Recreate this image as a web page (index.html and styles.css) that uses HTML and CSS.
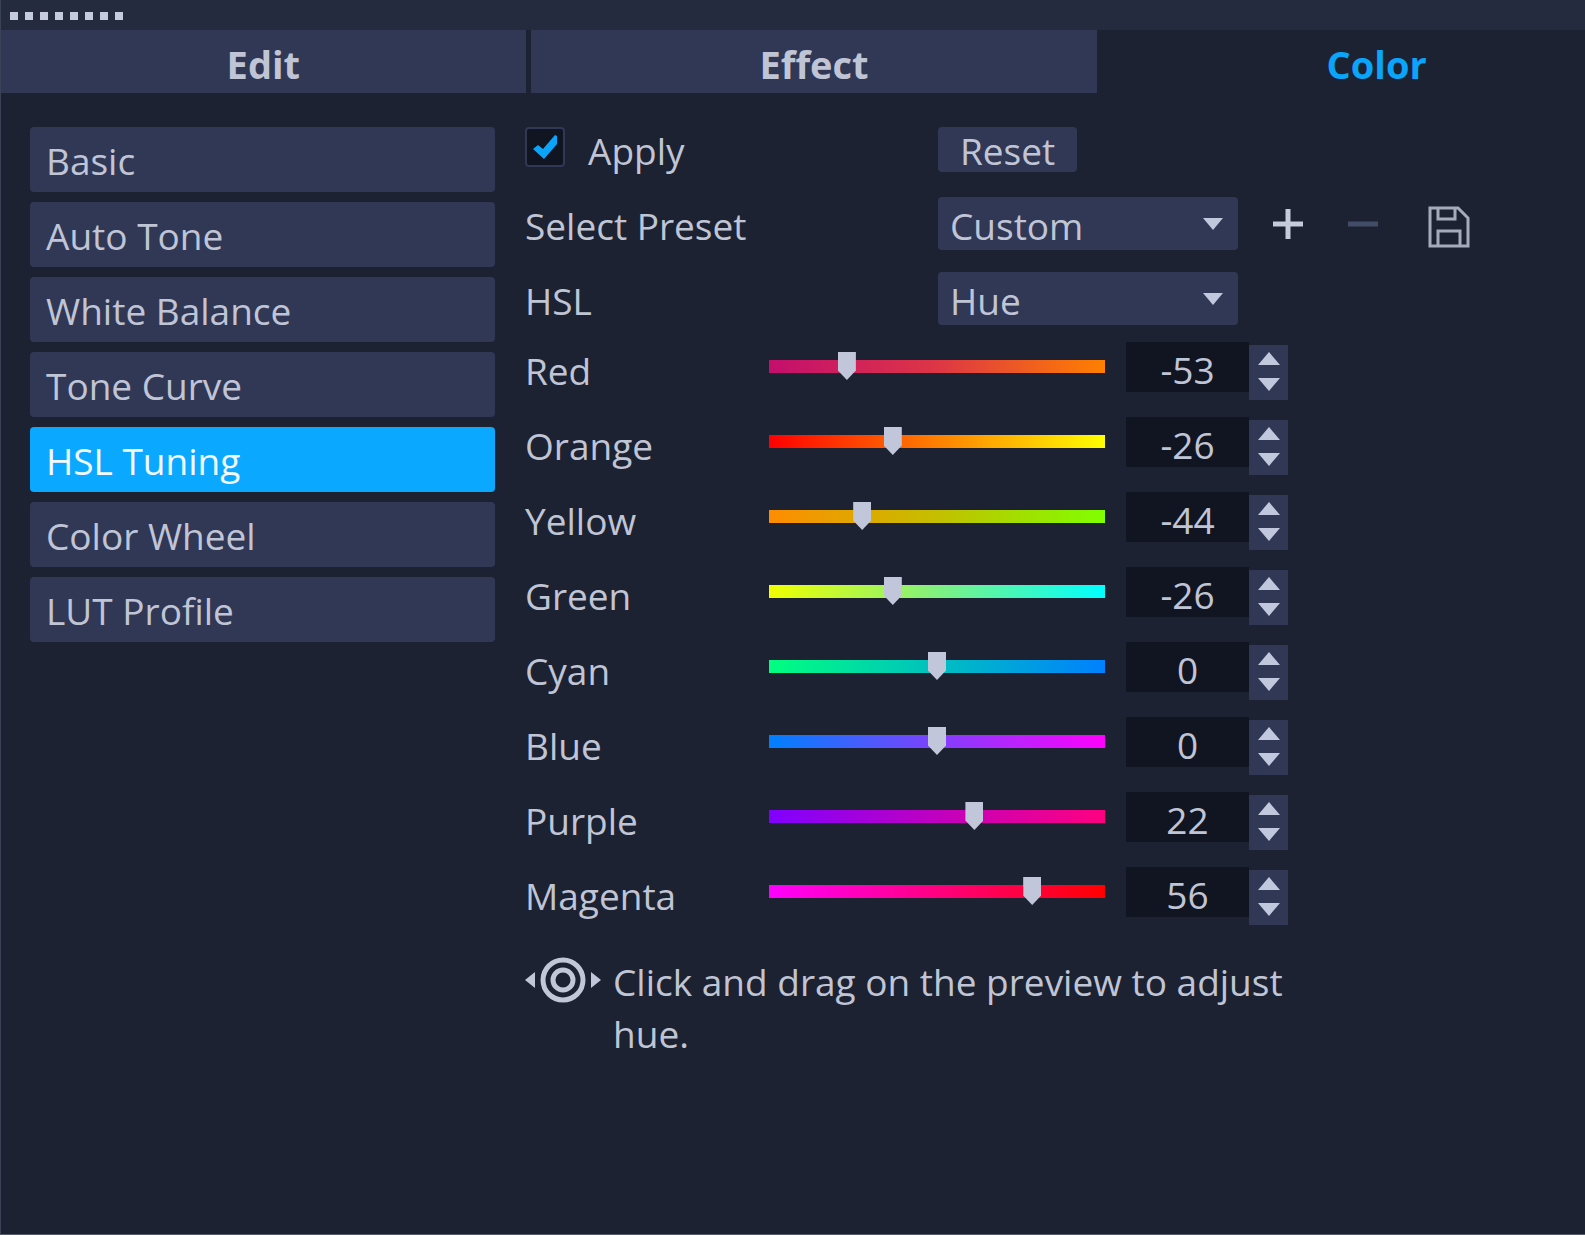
FILE: index.html
```html
<!DOCTYPE html>
<html lang="en">
    <head>
        <meta charset="UTF-8">
        <meta name="viewport" content="width=device-width, initial-scale=1">
        <title>Color - HSL Tuning</title>
        <link rel="stylesheet" href="styles.css">
    </head>
    <body>
        <!-- Drag handle of the docked panel -->
        <div class="grip">
            <span></span><span></span><span></span><span></span><span></span><span></span><span></span><span></span>
        </div>

        <nav class="tabs">
            <button type="button" class="tab tab-edit">Edit</button>
            <button type="button" class="tab tab-effect">Effect</button>
            <button type="button" class="tab tab-color active">Color</button>
        </nav>

        <main class="panel">
            <nav class="sections">
                <button type="button" class="section">Basic</button>
                <button type="button" class="section">Auto Tone</button>
                <button type="button" class="section">White Balance</button>
                <button type="button" class="section">Tone Curve</button>
                <button type="button" class="section active">HSL Tuning</button>
                <button type="button" class="section">Color Wheel</button>
                <button type="button" class="section">LUT Profile</button>
            </nav>

            <form class="controls">
                <div class="row row-short">
                    <div class="row-label check">
                        <input type="checkbox" id="apply" checked>
                        <label for="apply">Apply</label>
                    </div>
                    <button type="button" class="reset">Reset</button>
                </div>

                <div class="row">
                    <label class="row-label" for="preset">Select Preset</label>
                    <select id="preset">
                        <option>Custom</option>
                    </select>
                    <div class="preset-actions">
                        <button type="button" class="icon-button" aria-label="Add preset">
                            <svg width="32" height="32" viewBox="0 0 32 32"><path d="M16 1v30M1 16h30" stroke="#c5cadc" stroke-width="5"/></svg>
                        </button>
                        <button type="button" class="icon-button" aria-label="Remove preset" disabled>
                            <svg width="32" height="32" viewBox="0 0 32 32"><path d="M1 16h30" stroke="#414c68" stroke-width="5"/></svg>
                        </button>
                        <button type="button" class="icon-button save" aria-label="Save preset">
                            <svg width="42" height="42" viewBox="0 0 42 42" fill="none" stroke="#a5abbc" stroke-width="3">
                                <path d="M2 2h28l10 10v28H2z"/>
                                <path d="M10 2v11h17V2M10 40V25h22v15"/>
                            </svg>
                        </button>
                    </div>
                </div>

                <div class="row row-short">
                    <label class="row-label" for="hsl">HSL</label>
                    <select id="hsl">
                        <option>Hue</option>
                        <option>Saturation</option>
                        <option>Lightness</option>
                    </select>
                </div>

                <div class="row slider-row">
                    <label for="red">Red</label>
                    <input type="range" class="red" id="red" min="-100" max="100" value="-53">
                    <input type="text" class="value" aria-label="Red value" value="-53">
                    <div class="spinner">
                        <button type="button" class="up" aria-label="Increase red"></button>
                        <button type="button" class="down" aria-label="Decrease red"></button>
                    </div>
                </div>
                <div class="row slider-row">
                    <label for="orange">Orange</label>
                    <input type="range" class="orange" id="orange" min="-100" max="100" value="-26">
                    <input type="text" class="value" aria-label="Orange value" value="-26">
                    <div class="spinner">
                        <button type="button" class="up" aria-label="Increase orange"></button>
                        <button type="button" class="down" aria-label="Decrease orange"></button>
                    </div>
                </div>
                <div class="row slider-row">
                    <label for="yellow">Yellow</label>
                    <input type="range" class="yellow" id="yellow" min="-100" max="100" value="-44">
                    <input type="text" class="value" aria-label="Yellow value" value="-44">
                    <div class="spinner">
                        <button type="button" class="up" aria-label="Increase yellow"></button>
                        <button type="button" class="down" aria-label="Decrease yellow"></button>
                    </div>
                </div>
                <div class="row slider-row">
                    <label for="green">Green</label>
                    <input type="range" class="green" id="green" min="-100" max="100" value="-26">
                    <input type="text" class="value" aria-label="Green value" value="-26">
                    <div class="spinner">
                        <button type="button" class="up" aria-label="Increase green"></button>
                        <button type="button" class="down" aria-label="Decrease green"></button>
                    </div>
                </div>
                <div class="row slider-row">
                    <label for="cyan">Cyan</label>
                    <input type="range" class="cyan" id="cyan" min="-100" max="100" value="0">
                    <input type="text" class="value" aria-label="Cyan value" value="0">
                    <div class="spinner">
                        <button type="button" class="up" aria-label="Increase cyan"></button>
                        <button type="button" class="down" aria-label="Decrease cyan"></button>
                    </div>
                </div>
                <div class="row slider-row">
                    <label for="blue">Blue</label>
                    <input type="range" class="blue" id="blue" min="-100" max="100" value="0">
                    <input type="text" class="value" aria-label="Blue value" value="0">
                    <div class="spinner">
                        <button type="button" class="up" aria-label="Increase blue"></button>
                        <button type="button" class="down" aria-label="Decrease blue"></button>
                    </div>
                </div>
                <div class="row slider-row">
                    <label for="purple">Purple</label>
                    <input type="range" class="purple" id="purple" min="-100" max="100" value="22">
                    <input type="text" class="value" aria-label="Purple value" value="22">
                    <div class="spinner">
                        <button type="button" class="up" aria-label="Increase purple"></button>
                        <button type="button" class="down" aria-label="Decrease purple"></button>
                    </div>
                </div>
                <div class="row slider-row">
                    <label for="magenta">Magenta</label>
                    <input type="range" class="magenta" id="magenta" min="-100" max="100" value="56">
                    <input type="text" class="value" aria-label="Magenta value" value="56">
                    <div class="spinner">
                        <button type="button" class="up" aria-label="Increase magenta"></button>
                        <button type="button" class="down" aria-label="Decrease magenta"></button>
                    </div>
                </div>

                <div class="hint">
                    <svg width="76" height="48" viewBox="0 0 76 48">
                        <g fill="none" stroke="#c1c6d8">
                            <circle cx="38" cy="24" r="20" stroke-width="5"/>
                            <circle cx="38" cy="24" r="10" stroke-width="5"/>
                        </g>
                        <path d="M0 24l10-8v16zM76 24l-10-8v16z" fill="#c1c6d8"/>
                    </svg>
                    <p>Click and drag on the preview to adjust hue.</p>
                </div>
            </form>
        </main>
    </body>
</html>
```
FILE: styles.css
```css
* {
    box-sizing: border-box;
}

body {
    margin: 0;
    min-height: 100vh;
    display: flex;
    flex-direction: column;
    border-left: 1px solid #3a4256;
    border-bottom: 1px solid #565c6c;
    background-color: #1c2231;
    color: #c0c5d6;
    font-family: "Open Sans", "Noto Sans", sans-serif;
    font-size: 37px;
    line-height: 52px;
}

button, input, select {
    margin: 0;
    padding: 0;
    border: none;
    color: inherit;
    font: inherit;
}

.grip {
    display: flex;
    gap: 7px;
    height: 30px;
    padding: 12px 9px;
    background-color: #242b3f;
}

.grip span {
    width: 8px;
    height: 8px;
    background-color: #c5cadc;
}

/* Tabs */
.tabs {
    display: grid;
    grid-template-columns: 525fr 567fr 483fr;
    gap: 5px;
}

.tab {
    height: 63px;
    padding-top: 4px;
    background-color: #303856;
    font-size: 38px;
    font-weight: bold;
}

.tab-color {
    padding-left: 66px;
}

.tab.active {
    background-color: transparent;
    color: #0aa5fb;
}

/* Panel */
.panel {
    display: flex;
    gap: 30px;
    padding: 34px 29px;
}

.sections {
    display: flex;
    flex-direction: column;
    gap: 10px;
    width: 465px;
}

.section {
    height: 65px;
    padding: 2px 16px 0;
    border-radius: 4px;
    background-color: #303856;
    text-align: left;
}

.section.active {
    background-color: #0aa8ff;
    color: #f2faff;
}

.controls {
    flex: 1;
}

.row {
    display: flex;
    align-items: flex-start;
    height: 75px;
}

.row-short {
    height: 70px;
}

.row-label {
    width: 413px;
    padding-top: 3px;
}

.check {
    display: flex;
    gap: 23px;
    padding-top: 0;
    line-height: 48px;
}

.check input {
    appearance: none;
    width: 40px;
    height: 40px;
    border: 2px solid #303856;
    border-radius: 4px;
    background: #111521 url("data:image/svg+xml,%3Csvg xmlns='http://www.w3.org/2000/svg' viewBox='0 0 36 36'%3E%3Cpath d='M6 20l5-4 5 4L28 6l2 1v8L17 30z' fill='%230aa5fb'/%3E%3C/svg%3E") center / 36px no-repeat;
}

.check input:not(:checked) {
    background-image: none;
}

.reset {
    width: 139px;
    height: 45px;
    padding-top: 2px;
    border-radius: 4px;
    background-color: #303856;
    line-height: 43px;
}

select {
    appearance: none;
    width: 300px;
    height: 53px;
    padding: 3px 50px 0 12px;
    border-radius: 4px;
    background: #303856 url("data:image/svg+xml,%3Csvg xmlns='http://www.w3.org/2000/svg' viewBox='0 0 20 12'%3E%3Cpath d='M0 0h20L10 12z' fill='%23c1c8de'/%3E%3C/svg%3E") right 15px center / 20px 12px no-repeat;
}

.preset-actions {
    display: flex;
    align-items: center;
    gap: 43px;
    height: 53px;
    margin-left: 34px;
}

.icon-button {
    display: flex;
    background: none;
}

.save {
    margin-left: 6px;
    padding-top: 6px;
}

/* Sliders */
.slider-row label {
    width: 233px;
    padding-top: 3px;
}

input[type="range"] {
    appearance: none;
    width: 358px;
    height: 48px;
    background: linear-gradient(to right, var(--track)) center / calc(100% - 22px) 13px no-repeat;
}

input[type="range"]::-webkit-slider-thumb {
    appearance: none;
    width: 18px;
    height: 28px;
    background-color: #c1c6da;
    clip-path: polygon(0 0, 100% 0, 100% 66%, 50% 100%, 0 66%);
}

.red { --track: #c40e6e, #dd3645, #ff8000; }
.orange { --track: #ff0000, #ff8000, #ffff00; }
.yellow { --track: #ff8c00, #c4bf00, #80ff00; }
.green { --track: #f0ff00, #80f080, #00ffff; }
.cyan { --track: #00ff80, #00c0c0, #0080ff; }
.blue { --track: #0080ff, #8040ff, #ff00ff; }
.purple { --track: #8000ff, #c000c0, #ff0080; }
.magenta { --track: #ff00ff, #ff0080, #ff0000; }

.value {
    width: 123px;
    height: 50px;
    margin-left: 10px;
    padding-top: 5px;
    background-color: #111521;
    line-height: 45px;
    text-align: center;
}

.spinner {
    display: flex;
    flex-direction: column;
    width: 39px;
    height: 55px;
    margin-top: 3px;
    background-color: #303856;
}

.spinner button {
    flex: 1;
    background: none;
    background-repeat: no-repeat;
    background-size: 22px 13px;
}

.spinner .up {
    background-image: url("data:image/svg+xml,%3Csvg xmlns='http://www.w3.org/2000/svg' viewBox='0 0 22 13'%3E%3Cpath d='M0 13h22L11 0z' fill='%23c1c8de'/%3E%3C/svg%3E");
    background-position: center 7px;
}

.spinner .down {
    background-image: url("data:image/svg+xml,%3Csvg xmlns='http://www.w3.org/2000/svg' viewBox='0 0 22 13'%3E%3Cpath d='M0 0h22L11 13z' fill='%23c1c8de'/%3E%3C/svg%3E");
    background-position: center 5px;
}

/* Hint below the sliders */
.hint {
    display: flex;
    align-items: flex-start;
    gap: 12px;
    max-width: 780px;
    padding-top: 14px;
}

.hint svg {
    flex: none;
}

.hint p {
    margin: 0;
}
```
